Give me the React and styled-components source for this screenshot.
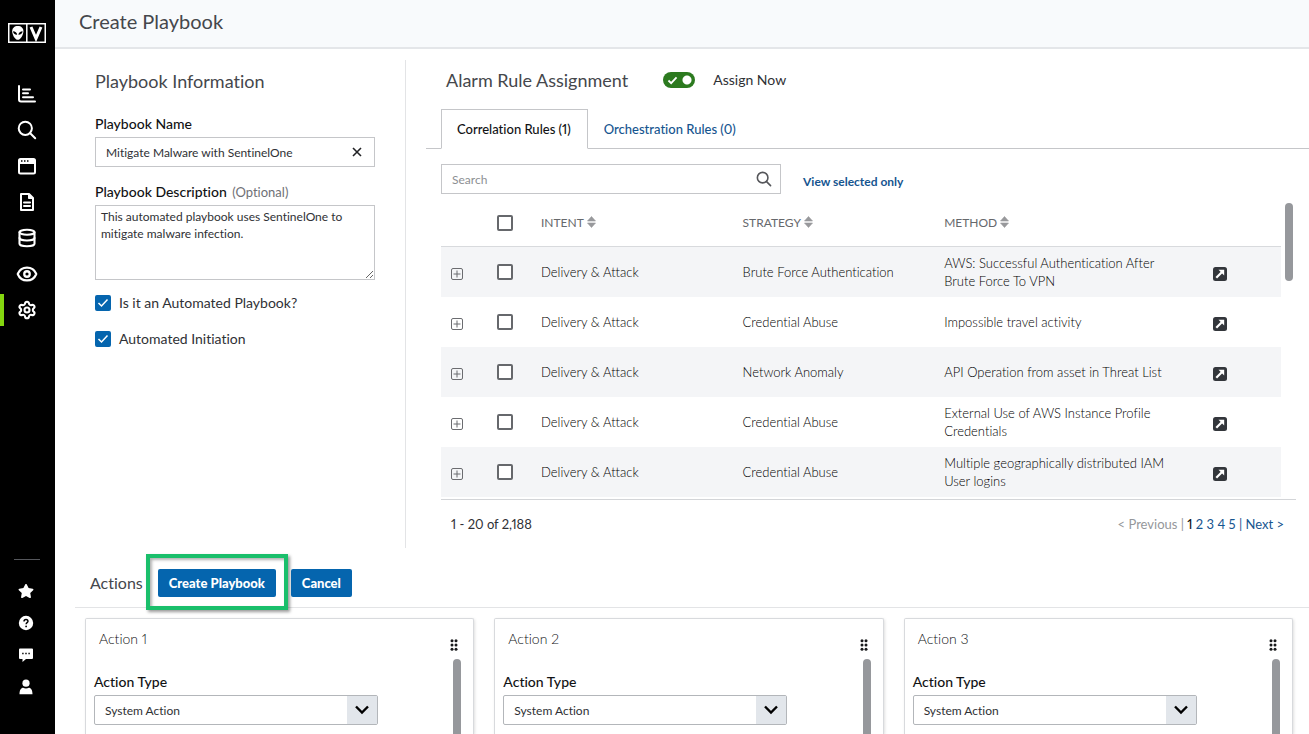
import { useState } from "react";
import styled, { createGlobalStyle, css } from "styled-components";
import { Settings, Database, Eye } from "lucide-react";
import { FaStar } from "react-icons/fa";

const rules = [
    { id: 1, intent: "Delivery & Attack", strategy: "Brute Force Authentication", method: "AWS: Successful Authentication After Brute Force To VPN" },
    { id: 2, intent: "Delivery & Attack", strategy: "Credential Abuse", method: "Impossible travel activity" },
    { id: 3, intent: "Delivery & Attack", strategy: "Network Anomaly", method: "API Operation from asset in Threat List" },
    { id: 4, intent: "Delivery & Attack", strategy: "Credential Abuse", method: "External Use of AWS Instance Profile Credentials" },
    { id: 5, intent: "Delivery & Attack", strategy: "Credential Abuse", method: "Multiple geographically distributed IAM User logins" },
];

const columns = ["Intent", "Strategy", "Method"];
const actions = ["Action 1", "Action 2", "Action 3"];

// icons

function LogoIcon() {
    return (
        <svg width="38" height="20" viewBox="0 0 38 20" fill="none">
            <rect x="0.75" y="0.75" width="36.5" height="18.5" stroke="#fff" strokeWidth="1.5" />
            <path d="M18.8 1v18" stroke="#fff" strokeWidth="1.5" />
            <path d="M9.8 3c3.400 0 5.600 2 5.600 5.200 0 3.600-2.800 8.600-5.600 8.600S4.200 11.800 4.200 8.200C4.200 5 6.400 3 9.800 3z" fill="#fff" />
            <path d="M5 8.200c2.200 0 4 1.300 4.200 3.500C6.800 11.800 5.200 10.500 5 8.200zM14.600 8.200c-2.200 0-4 1.300-4.200 3.500 2.400.1 4-1.200 4.200-3.500z" fill="#000" />
            <path d="M23 4l5 11.500L33 4" stroke="#fff" strokeWidth="3" />
        </svg>
    );
}

function ChartIcon() {
    return (
        <svg width="20" height="20" viewBox="0 0 20 20" fill="none" stroke="#fff" strokeWidth="2" strokeLinecap="round">
            <path d="M2 2v13.500a2 2 0 0 0 2 2h14M6 5.500h7M6 9.300h5M6 13.200h10" />
        </svg>
    );
}

function SearchIcon({ size = 20, color = "#fff" }) {
    return (
        <svg width={size} height={size} viewBox="0 0 20 20" fill="none" stroke={color} strokeWidth="2" strokeLinecap="round">
            <circle cx="8.300" cy="8.300" r="6.600" />
            <path d="M13.200 13.200l5 5" />
        </svg>
    );
}

function WindowIcon() {
    return (
        <svg width="20" height="20" viewBox="0 0 20 20" fill="none">
            <rect x="2" y="3" width="16" height="14.500" rx="1.500" stroke="#fff" strokeWidth="2" />
            <path d="M2 3h16v5H2z" fill="#fff" />
            <path d="M4 5h1.500M7 5h1.500M10 5h1.500" stroke="#000" strokeWidth="1.300" />
        </svg>
    );
}

function DocumentIcon() {
    return (
        <svg width="20" height="20" viewBox="0 0 20 20" fill="none" stroke="#fff" strokeWidth="2" strokeLinejoin="round">
            <path d="M4 2h8l4 4v12H4z" />
            <path d="M11.500 2v4.500H16z" fill="#fff" strokeWidth="1" />
            <path d="M7 10.500h6M7 14h6" strokeLinecap="round" />
        </svg>
    );
}

function HelpIcon() {
    return (
        <svg width="16" height="16" viewBox="0 0 16 16" fill="none">
            <circle cx="8" cy="8" r="7.200" fill="#fff" />
            <path d="M6 6.500c0-1.200.9-2 2-2s2 .7 2 1.800c0 1.300-1.900 1.400-1.900 2.900" stroke="#000" strokeWidth="1.400" />
            <circle cx="8.100" cy="11.400" r="0.900" fill="#000" />
        </svg>
    );
}

function ChatIcon() {
    return (
        <svg width="16" height="16" viewBox="0 0 16 16">
            <path d="M2 1.500h12a1 1 0 0 1 1 1v8.500a1 1 0 0 1-1 1H8l-3.500 3V12H2a1 1 0 0 1-1-1V2.500a1 1 0 0 1 1-1z" fill="#fff" />
            <path d="M4.200 6.500h1.400M7.300 6.500h1.400M10.400 6.500h1.400" stroke="#000" strokeWidth="1.400" />
        </svg>
    );
}

function UserIcon() {
    return (
        <svg width="16" height="16" viewBox="0 0 16 16" fill="#fff">
            <circle cx="8" cy="4.200" r="3.600" />
            <path d="M1.500 15.200c0-4.200 1.500-6.400 3.700-6.400.8.500 1.700.8 2.800.8s2-.3 2.800-.8c2.200 0 3.700 2.200 3.700 6.400z" />
        </svg>
    );
}

function SortIcon() {
    return (
        <svg width="9" height="12" viewBox="0 0 9 12" fill="#98999c">
            <path d="M4.500 0.500L8.500 5H.5zM4.500 11.500L.5 7h8z" stroke="#98999c" strokeWidth="0.600" strokeLinejoin="round" />
        </svg>
    );
}

function ExpandIcon() {
    return (
        <svg width="12" height="12" viewBox="0 0 12 12" fill="none" stroke="#6b6c70">
            <rect x="0.500" y="0.500" width="11" height="11" rx="1.500" />
            <path d="M6 2.500v7M2.500 6h7" />
        </svg>
    );
}

function OpenIcon() {
    return (
        <svg width="14" height="14" viewBox="0 0 14 14" fill="none">
            <rect width="14" height="14" rx="2.500" fill="#33363b" />
            <path d="M3.300 10.700L8.800 5.200" stroke="#fff" strokeWidth="2.200" />
            <path d="M5.500 2.800h5.700v5.700z" fill="#fff" />
        </svg>
    );
}

function CheckIcon({ width = 12, height = 10, weight = 1.5 }) {
    return (
        <svg width={width} height={height} viewBox="0 0 12 10" fill="none">
            <path d="M1.500 5l3 3 6-6.500" stroke="#fff" strokeWidth={weight} />
        </svg>
    );
}

function GripIcon() {
    return (
        <svg width="8" height="12" viewBox="0 0 8 12" fill="#17181a">
            <circle cx="2" cy="1.800" r="1.500" />
            <circle cx="6" cy="1.800" r="1.500" />
            <circle cx="2" cy="6" r="1.500" />
            <circle cx="6" cy="6" r="1.500" />
            <circle cx="2" cy="10.200" r="1.500" />
            <circle cx="6" cy="10.200" r="1.500" />
        </svg>
    );
}

const mainNav = [
    { name: "Dashboard", icon: <ChartIcon /> },
    { name: "Search", icon: <SearchIcon /> },
    { name: "Activity", icon: <WindowIcon /> },
    { name: "Reports", icon: <DocumentIcon /> },
    { name: "Data Sources", icon: <Database size={20} strokeWidth={2.5} /> },
    { name: "Investigations", icon: <Eye size={22} strokeWidth={2.5} /> },
    { name: "Settings", icon: <Settings size={20} strokeWidth={2.5} />, active: true },
];

const helpNav = [
    { name: "Favorites", icon: <FaStar size={16} /> },
    { name: "Help", icon: <HelpIcon /> },
    { name: "Feedback", icon: <ChatIcon /> },
    { name: "Profile", icon: <UserIcon /> },
];

function Check({ label, text, ...props }) {
    return (
        <CheckLabel>
            <CheckBox>
                <input type="checkbox" aria-label={label} {...props} />
                <CheckIcon />
            </CheckBox>
            {text}
        </CheckLabel>
    );
}

function ActionCard({ title, id }) {
    return (
        <Card>
            <CardHeader>
                <h3>{title}</h3>
                <GripIcon />
            </CardHeader>
            <CardBody>
                <div className="fields">
                    <Label htmlFor={id}>Action Type</Label>
                    <SelectBox>
                        <select id={id}>
                            <option>System Action</option>
                        </select>
                        <span>
                            <svg width="16" height="10" viewBox="0 0 16 10" fill="none">
                                <path d="M2 1.500l6 6 6-6" stroke="#000" strokeWidth="2.400" />
                            </svg>
                        </span>
                    </SelectBox>
                </div>
                <CardThumb />
            </CardBody>
        </Card>
    );
}

export default function App() {
    const [name, setName] = useState("Mitigate Malware with SentinelOne");
    const [description, setDescription] = useState("This automated playbook uses SentinelOne to mitigate malware infection.");

    return (
        <Page>
            <GlobalStyle />
            <Sidebar>
                <a className="logo" href="#home" aria-label="Home"><LogoIcon /></a>
                <NavList>
                    {mainNav.map((item) => (
                        <NavLink key={item.name} href="#nav" aria-label={item.name} $active={item.active}>{item.icon}</NavLink>
                    ))}
                </NavList>
                <HelpList>
                    {helpNav.map((item) => (
                        <NavLink key={item.name} href="#help" aria-label={item.name} $small>{item.icon}</NavLink>
                    ))}
                </HelpList>
            </Sidebar>

            <Content>
                <Header>
                    <h1>Create Playbook</h1>
                </Header>

                <Panels>
                    <InfoPanel>
                        <Heading>Playbook Information</Heading>
                        <Label htmlFor="name">Playbook Name</Label>
                        <NameField>
                            <input id="name" type="text" value={name} onChange={(e) => setName(e.target.value)} />
                            <button type="button" aria-label="Clear" onClick={() => setName("")}>
                                <svg width="10" height="10" viewBox="0 0 10 10" stroke="#222326" strokeWidth="1.600">
                                    <path d="M1 1l8 8M9 1L1 9" />
                                </svg>
                            </button>
                        </NameField>
                        <Label htmlFor="description">Playbook Description <small>(Optional)</small></Label>
                        <Description id="description" value={description} onChange={(e) => setDescription(e.target.value)} />
                        <CheckList>
                            <Check text="Is it an Automated Playbook?" defaultChecked />
                            <Check text="Automated Initiation" defaultChecked />
                        </CheckList>
                    </InfoPanel>

                    <RulesPanel>
                        <RulesTitle>
                            <Heading>Alarm Rule Assignment</Heading>
                            <label>
                                <Toggle>
                                    <input type="checkbox" defaultChecked />
                                    <CheckIcon width={11} height={9} weight={2} />
                                </Toggle>
                                Assign Now
                            </label>
                        </RulesTitle>
                        <Tabs role="tablist">
                            <Tab type="button" role="tab" aria-selected="true" $active>Correlation Rules (1)</Tab>
                            <Tab type="button" role="tab" aria-selected="false">Orchestration Rules (0)</Tab>
                        </Tabs>
                        <Tools>
                            <SearchField>
                                <input type="text" placeholder="Search" aria-label="Search" />
                                <SearchIcon size={16} color="#55565a" />
                            </SearchField>
                            <a href="#selected">View selected only</a>
                        </Tools>
                        <TableArea>
                            <Table>
                                <colgroup>
                                    <col className="expand" />
                                    <col className="check" />
                                    <col className="text" />
                                    <col className="text" />
                                    <col />
                                    <col className="open" />
                                </colgroup>
                                <thead>
                                    <tr>
                                        <th></th>
                                        <th><Check label="Select all rules" /></th>
                                        {columns.map((column) => (
                                            <th key={column}>{column}<SortIcon /></th>
                                        ))}
                                        <th></th>
                                    </tr>
                                </thead>
                                <tbody>
                                    {rules.map((rule) => (
                                        <tr key={rule.id}>
                                            <td className="icon expander">
                                                <IconButton type="button" aria-label="Expand"><ExpandIcon /></IconButton>
                                            </td>
                                            <td><Check label={"Select " + rule.method} /></td>
                                            <td>{rule.intent}</td>
                                            <td>{rule.strategy}</td>
                                            <td className="method">{rule.method}</td>
                                            <td className="icon">
                                                <IconButton type="button" aria-label="Open rule"><OpenIcon /></IconButton>
                                            </td>
                                        </tr>
                                    ))}
                                </tbody>
                            </Table>
                            <TableThumb />
                        </TableArea>
                        <Pager>
                            <span>1 - 20 of 2,188</span>
                            <nav>
                                <span className="off">&lt; Previous |</span> <b>1</b> <a href="#2">2</a> <a href="#3">3</a> <a href="#4">4</a> <a href="#5">5</a> | <a href="#next">Next &gt;</a>
                            </nav>
                        </Pager>
                    </RulesPanel>
                </Panels>

                <ActionBar>
                    <h2>Actions</h2>
                    <Button type="button" $highlight>Create Playbook</Button>
                    <Button type="button">Cancel</Button>
                </ActionBar>
                <Cards>
                    {actions.map((title, i) => (
                        <ActionCard key={title} title={title} id={"action-type-" + i} />
                    ))}
                </Cards>
            </Content>
        </Page>
    );
}

const GlobalStyle = createGlobalStyle`
    * {
        box-sizing: border-box;
    }
    body {
        margin: 0;
        background-color: #fff;
        color: #2f3135;
        font-family: Lato, "Open Sans", sans-serif;
        font-size: 14px;
        line-height: 20px;
        font-variant-ligatures: none;
        font-variant-numeric: proportional-nums;
    }
    h1, h2, h3 {
        margin: 0;
        font-weight: 400;
        color: #45474c;
    }
    input, textarea, select, button {
        font-family: inherit;
        font-variant: inherit;
        color: inherit;
    }
    a {
        color: #16558f;
        text-decoration: none;
    }
    svg {
        flex-shrink: 0;
    }
`;

const Page = styled.div`
    display: flex;
    height: 100vh;
    overflow: hidden;
`;

const Sidebar = styled.aside`
    width: 55px;
    flex-shrink: 0;
    display: flex;
    flex-direction: column;
    background-color: #000;

    .logo {
        display: flex;
        padding: 23px 8px 33px;
    }
`;

const NavList = styled.nav`
    display: flex;
    flex-direction: column;
`;

const HelpList = styled.nav`
    display: flex;
    flex-direction: column;
    margin-top: auto;
    padding-bottom: 31px;

    &::before {
        content: "";
        width: 26px;
        margin: 0 14px 15px;
        border-top: 1px solid #55575c;
    }
`;

const NavLink = styled.a`
    display: flex;
    align-items: center;
    justify-content: center;
    height: ${(props) => (props.$small ? "32px" : "36px")};
    padding-right: ${(props) => (props.$small ? "3px" : "1px")};
    color: #fff;

    ${(props) => props.$active && css`
        height: 32px;
        margin: 2px 0;
        padding-right: 5px;
        border-left: 4px solid #84d60f;
    `}
`;

const Content = styled.main`
    flex: 1;
    min-width: 0;
    display: flex;
    flex-direction: column;
`;

const Header = styled.header`
    padding: 9px 24px 14px;
    background-color: #f8fafc;
    border-bottom: 2px solid #e4e6e9;

    h1 {
        font-size: 20px;
        line-height: 24px;
    }
`;

const Panels = styled.div`
    display: grid;
    grid-template-columns: 351px 1fr;
    padding-top: 11px;
`;

const Heading = styled.h2`
    font-size: 18px;
    line-height: 24px;
`;

const Label = styled.label`
    display: block;
    margin-bottom: 3px;
    font-size: 14px;
    font-weight: 500;
    color: #111214;

    small {
        margin-left: 2px;
        font-size: 13px;
        font-weight: 400;
        color: #6f7176;
    }
`;

const InfoPanel = styled.section`
    padding: 9px 30px 0 40px;
    border-right: 1px solid #e3e4e6;

    ${Heading} {
        margin-bottom: 21px;
    }
`;

const NameField = styled.div`
    display: flex;
    align-items: center;
    height: 30px;
    margin-bottom: 15px;
    padding: 0 12px 0 10px;
    border: 1px solid #c5c6c9;

    input {
        flex: 1;
        min-width: 0;
        padding: 0;
        border: none;
        outline: none;
        font-size: 12px;
    }
    button {
        display: flex;
        padding: 0;
        border: none;
        background: none;
    }
`;

const Description = styled.textarea`
    display: block;
    width: 100%;
    height: 75px;
    padding: 2px 5px;
    border: 1px solid #c5c6c9;
    outline: none;
    font-size: 12px;
    line-height: 17px;
`;

const CheckList = styled.div`
    display: flex;
    flex-direction: column;
    gap: 16px;
    padding-top: 13px;
`;

const CheckLabel = styled.label`
    display: flex;
    align-items: center;
    gap: 8px;
`;

const CheckBox = styled.span`
    position: relative;
    display: flex;

    input {
        appearance: none;
        width: 16px;
        height: 16px;
        margin: 0;
        border: 2px solid #66686c;
        border-radius: 2px;
        background-color: #fff;
    }
    input:checked {
        border-color: #0565ae;
        background-color: #0565ae;
    }
    svg {
        display: none;
        position: absolute;
        top: 3px;
        left: 2px;
        pointer-events: none;
    }
    input:checked + svg {
        display: block;
    }
`;

const RulesPanel = styled.section`
    min-width: 0;
    padding-top: 8px;
`;

const RulesTitle = styled.div`
    display: flex;
    align-items: center;
    gap: 35px;
    padding-left: 40px;

    label {
        display: flex;
        align-items: center;
        gap: 18px;
    }
`;

const Toggle = styled.span`
    position: relative;
    display: flex;

    input {
        appearance: none;
        width: 32px;
        height: 16px;
        margin: 0;
        border-radius: 8px;
        background: radial-gradient(circle at 24px 8px, #fff 4px, #2c7a1f 5px);
    }
    svg {
        position: absolute;
        top: 4px;
        left: 4px;
        pointer-events: none;
    }
`;

const Tabs = styled.div`
    display: flex;
    margin: 17px 0 0 20px;
    padding-left: 15px;
    border-bottom: 1px solid #c5c6c9;
`;

const Tab = styled.button`
    height: 40px;
    margin-bottom: -1px;
    padding: 0 16px 0 15px;
    border: 1px solid transparent;
    background: none;
    font-size: 13px;
    font-weight: 500;
    color: #16558f;

    ${(props) => props.$active && css`
        border-color: #c5c6c9;
        border-bottom-color: #fff;
        background-color: #fff;
        color: #111214;
    `}
`;

const Tools = styled.div`
    display: flex;
    align-items: center;
    gap: 22px;
    padding: 15px 0 6px 35px;

    a {
        padding-top: 6px;
        font-size: 12px;
        font-weight: 700;
    }
`;

const SearchField = styled.div`
    display: flex;
    align-items: center;
    width: 340px;
    height: 30px;
    padding: 0 8px 0 10px;
    border: 1px solid #c5c6c9;

    input {
        flex: 1;
        min-width: 0;
        padding: 0;
        border: none;
        outline: none;
        font-size: 12px;
    }
    input::placeholder {
        color: #8d8f93;
    }
`;

const TableArea = styled.div`
    display: flex;
    gap: 4px;
    margin: 0 13px 0 35px;
    padding: 0 3px 2px 0;
    border-bottom: 1px solid #d3d5d8;
`;

const Table = styled.table`
    flex: 1;
    min-width: 0;
    table-layout: fixed;
    border-collapse: separate;
    border-spacing: 0;
    font-size: 13px;
    line-height: 18px;

    .expand {
        width: 56px;
    }
    .check {
        width: 44px;
    }
    .text {
        width: 24%;
    }
    .open {
        width: 68px;
    }

    th {
        height: 47px;
        padding: 0;
        border-bottom: 1px solid #d8dadd;
        font-size: 12px;
        font-weight: 400;
        text-align: left;
        text-transform: uppercase;
        color: #66686c;
    }
    th > svg {
        margin-left: 3px;
        vertical-align: -1px;
    }
    td {
        height: 50px;
        padding: 0;
        font-weight: 300;
        color: #000;
    }
    tbody tr:nth-child(odd) {
        background-color: #f4f5f7;
    }
    .method {
        padding-right: 40px;
    }
    .icon {
        padding-top: 4px;
    }
    .expander {
        padding-left: 10px;
    }
`;

const IconButton = styled.button`
    display: flex;
    padding: 0;
    border: none;
    background: none;
`;

const TableThumb = styled.div`
    width: 8px;
    height: 78px;
    margin-top: 3px;
    border-radius: 4px;
    background-color: #96989c;
`;

const Pager = styled.div`
    display: flex;
    justify-content: space-between;
    padding: 14px 25px 14px 45px;
    font-size: 13px;

    nav {
        color: #16558f;
    }
    b {
        font-weight: 500;
        color: #111214;
    }
    .off {
        color: #95979b;
    }
`;

const ActionBar = styled.div`
    display: flex;
    align-items: center;
    gap: 15px;
    margin-left: 20px;
    padding: 21px 15px 10px;
    border-bottom: 1px solid #e3e4e6;

    h2 {
        font-size: 16px;
    }
`;

const Button = styled.button`
    position: relative;
    height: 28px;
    padding: 0 11px;
    border: none;
    border-radius: 2px;
    background-color: #0565ae;
    color: #fff;
    font-size: 13px;
    font-weight: 900;

    ${(props) => props.$highlight && css`
        &::after {
            content: "";
            position: absolute;
            inset: -15px -12px -13px -12px;
            border: 4px solid #1abf6b;
            box-shadow: 2px 2px 3px rgba(0, 0, 0, 0.4), inset 2px 2px 3px rgba(0, 0, 0, 0.3);
        }
    `}
`;

const Cards = styled.div`
    flex: 1;
    display: grid;
    grid-template-columns: repeat(3, 1fr);
    gap: 20px;
    padding: 10px 16px 0 30px;
`;

const Card = styled.section`
    display: flex;
    flex-direction: column;
    border: 1px solid #d8dadd;
    border-bottom: none;
    border-radius: 2px 2px 0 0;
    box-shadow: 1px 1px 3px rgba(0, 0, 0, 0.12);
`;

const CardHeader = styled.div`
    display: flex;
    justify-content: space-between;
    height: 40px;
    padding: 10px 15px 0 13px;

    h3 {
        font-size: 14px;
        font-weight: 300;
        color: #111214;
    }
    svg {
        margin-top: 10px;
    }
`;

const CardBody = styled.div`
    flex: 1;
    display: flex;
    justify-content: space-between;
    padding: 0 12px 0 8px;

    .fields {
        flex: 1;
        max-width: 284px;
        padding-top: 13px;
    }
`;

const CardThumb = styled.div`
    width: 8px;
    border-radius: 4px 4px 0 0;
    background-color: #96989c;
`;

const SelectBox = styled.div`
    position: relative;

    select {
        appearance: none;
        display: block;
        width: 100%;
        height: 30px;
        padding: 0 40px 0 10px;
        border: 1px solid #b3b6ba;
        border-radius: 2px;
        background-color: #fff;
        font-size: 12px;
    }
    span {
        position: absolute;
        top: 1px;
        right: 1px;
        bottom: 1px;
        width: 30px;
        display: flex;
        align-items: center;
        justify-content: center;
        background-color: #e2e6eb;
        pointer-events: none;
    }
`;
